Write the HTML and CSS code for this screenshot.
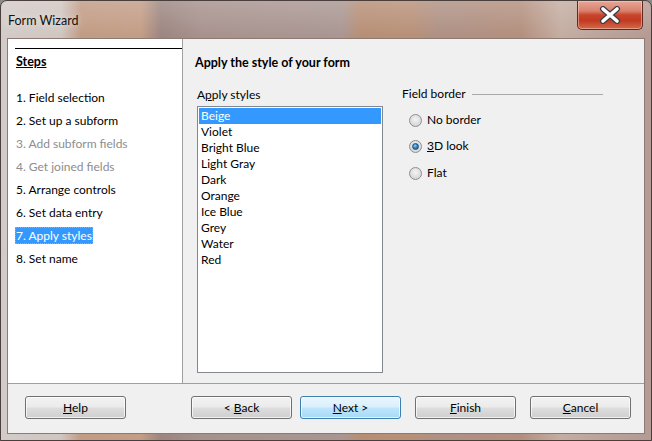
FILE: index.html
```html
<!DOCTYPE html>
<html>
<head>
<meta charset="utf-8">
<link rel="stylesheet" href="styles.css">
</head>
<body>
<div class="window">
  <div class="titlebar">
    <span class="title">Form Wizard</span>
    <div class="close">
      <svg width="24" height="18" viewBox="0 0 24 18">
        <path d="M5 3 L19 15 M19 3 L5 15" stroke="#3b3b48" stroke-width="6" stroke-linecap="round"/>
        <path d="M5 3 L19 15 M19 3 L5 15" stroke="#ffffff" stroke-width="3.6" stroke-linecap="round"/>
      </svg>
    </div>
  </div>
  <div class="client">
    <div class="main">
      <div class="steps">
        <div class="rule"></div>
        <div class="steps-title">Steps</div>
        <ul class="step-list">
          <li class="step">1. Field selection</li>
          <li class="step">2. Set up a subform</li>
          <li class="step disabled">3. Add subform fields</li>
          <li class="step disabled">4. Get joined fields</li>
          <li class="step">5. Arrange controls</li>
          <li class="step">6. Set data entry</li>
          <li class="step"><span class="current">7. Apply styles</span></li>
          <li class="step">8. Set name</li>
        </ul>
      </div>
      <div class="page">
        <div class="page-title">Apply the style of your form</div>
        <div class="columns">
          <div class="styles-col">
            <div class="label">A<u>p</u>ply styles</div>
            <ul class="listbox">
              <li class="item selected">Beige</li>
              <li class="item">Violet</li>
              <li class="item">Bright Blue</li>
              <li class="item">Light Gray</li>
              <li class="item">Dark</li>
              <li class="item">Orange</li>
              <li class="item">Ice Blue</li>
              <li class="item">Grey</li>
              <li class="item">Water</li>
              <li class="item">Red</li>
            </ul>
          </div>
          <div class="border-col">
            <div class="group-label">Field border</div>
            <div class="radio-row"><span class="radio"></span>No border</div>
            <div class="radio-row second"><span class="radio checked"></span><u>3</u>D look</div>
            <div class="radio-row"><span class="radio"></span>Flat</div>
          </div>
        </div>
      </div>
    </div>
    <div class="buttonbar">
      <button class="btn help"><u>H</u>elp</button>
      <button class="btn back">&lt; <u>B</u>ack</button>
      <button class="btn next default"><u>N</u>ext &gt;</button>
      <button class="btn finish"><u>F</u>inish</button>
      <button class="btn cancel"><u>C</u>ancel</button>
    </div>
  </div>
</div>
</body>
</html>
```
FILE: styles.css
```css
* { box-sizing: border-box; }
html, body { margin: 0; padding: 0; }
body {
  width: 652px;
  height: 441px;
  overflow: hidden;
  font-family: "Lato", "Open Sans", sans-serif;
  font-size: 12px;
  color: #000;
  background: #8a8a8a;
}
.window {
  width: 652px;
  height: 441px;
  border: 1px solid #4a3f3c;
  border-radius: 7px 7px 0 0;
  background:
    linear-gradient(180deg, rgba(255,255,255,0.18) 0, rgba(255,255,255,0) 36px),
    linear-gradient(90deg, #d2cbc8 0, #d0c6c1 60px, #c19b83 80px, #c39d86 140px, #9c8580 160px, #a7918d 200px, #a99692 340px, #b78e75 360px, #b89078 410px, #ae9084 440px, #b38f7d 520px, #c4ada2 560px, #bba39a 600px, #b39a92 652px);
  display: flex;
  flex-direction: column;
  padding: 0 6px 6px 6px;
  position: relative;
}
.titlebar {
  height: 37px;
  position: relative;
  display: flex;
  align-items: flex-start;
}
.title {
  font-size: 12.5px;
  line-height: 16px;
  margin-top: 12px;
  margin-left: 1px;
  color: #111;
  text-shadow: 0 0 8px rgba(255,255,255,0.8);
}
.close {
  position: absolute;
  right: 2px;
  top: 0;
  width: 66px;
  height: 29px;
  border: 1px solid #5e2a22;
  border-top: none;
  border-radius: 0 0 5px 5px;
  background: linear-gradient(180deg, #e8a797 0, #d9826d 35%, #c8452b 50%, #c03b22 70%, #d36a4a 100%);
  box-shadow: inset 0 0 0 1px rgba(255,220,210,0.45);
  display: flex;
  align-items: center;
  justify-content: center;
}
.client {
  flex: 1;
  background: #f0f0f0;
  border: 1px solid #8e7a74;
  display: flex;
  flex-direction: column;
}
.main {
  height: 345px;
  display: flex;
  border-bottom: 1px solid #a0a0a0;
}
.steps {
  width: 175px;
  background: #fff;
  border-right: 1px solid #a0a0a0;
  padding-top: 9px;
}
.rule {
  height: 1px;
  background: #000;
  margin-left: 7px;
}
.steps-title {
  margin: 5px 0 0 8px;
  line-height: 16px;
  font-size: 12.5px;
  font-weight: bold;
  text-decoration: underline;
}
.step-list {
  list-style: none;
  margin: 19px 0 0 0;
  padding: 0;
  display: flex;
  flex-direction: column;
  gap: 6px;
}
.step {
  height: 17px;
  line-height: 17px;
  padding-left: 8px;
  white-space: nowrap;
}
.step.disabled { color: #8d8d8d; }
.current {
  display: inline-block;
  margin-left: -1px;
  padding: 0 1px 0 1px;
  background: #3399ff;
  color: #fff;
  outline: 1px dotted #d9a15a;
  outline-offset: -1px;
}
.page {
  flex: 1;
  padding: 16px 0 0 12px;
}
.page-title {
  font-weight: bold;
  font-size: 12.5px;
  line-height: 16px;
}
.columns {
  display: flex;
  margin-top: 16px;
}
.styles-col {
  width: 186px;
  margin-left: 2px;
}
.label {
  line-height: 16px;
}
.listbox {
  list-style: none;
  margin: 3px 0 0 0;
  padding: 1px;
  height: 267px;
  background: #fff;
  border: 1px solid #828790;
}
.item {
  height: 16px;
  line-height: 16px;
  padding-left: 2px;
}
.item.selected {
  background: #3399ff;
  color: #fff;
}
.border-col {
  margin-left: 19px;
  width: 201px;
  margin-top: -1px;
}
.group-label {
  display: flex;
  align-items: center;
  line-height: 16px;
}
.group-label::after {
  content: "";
  flex: 1;
  height: 1px;
  background: #a8a8a8;
  margin-left: 6px;
}
.radio-row {
  display: flex;
  align-items: center;
  line-height: 16px;
  margin-top: 10px;
  padding-left: 7px;
}
.radio-row:last-child { margin-top: 11px; }
.radio {
  width: 13px;
  height: 13px;
  border-radius: 50%;
  border: 1px solid #8f8f8f;
  background: radial-gradient(circle at 50% 40%, #f4f4f4 0, #dcdcdc 60%, #c8c8c8 100%);
  margin-right: 5px;
  display: flex;
  align-items: center;
  justify-content: center;
}
.radio.checked::after {
  content: "";
  width: 7px;
  height: 7px;
  border-radius: 50%;
  background: radial-gradient(circle at 40% 35%, #8fd0f5 0, #2f8cd1 45%, #0d4f8a 100%);
  border: 1px solid #1e4c78;
  box-sizing: border-box;
}
.buttonbar {
  flex: 1;
  display: flex;
  align-items: flex-start;
  padding: 12px 0 0 17px;
}
.btn {
  width: 101px;
  height: 23px;
  font-family: inherit;
  font-size: 12px;
  color: #000;
  border: 1px solid #707070;
  border-radius: 3px;
  background: linear-gradient(180deg, #f2f2f2 0, #ebebeb 48%, #dddddd 52%, #cfcfcf 100%);
  box-shadow: inset 0 0 0 1px rgba(255,255,255,0.7);
  padding: 0;
  line-height: 19px;
}
.btn.default {
  border-color: #3c7fb1;
  background: linear-gradient(180deg, #eaf6fd 0, #d9f0fc 48%, #bee6fd 52%, #a7d9f5 100%);
}
.back { margin-left: 65px; }
.next { margin-left: 8px; }
.finish { margin-left: 14px; }
.cancel { margin-left: 14px; }
```
